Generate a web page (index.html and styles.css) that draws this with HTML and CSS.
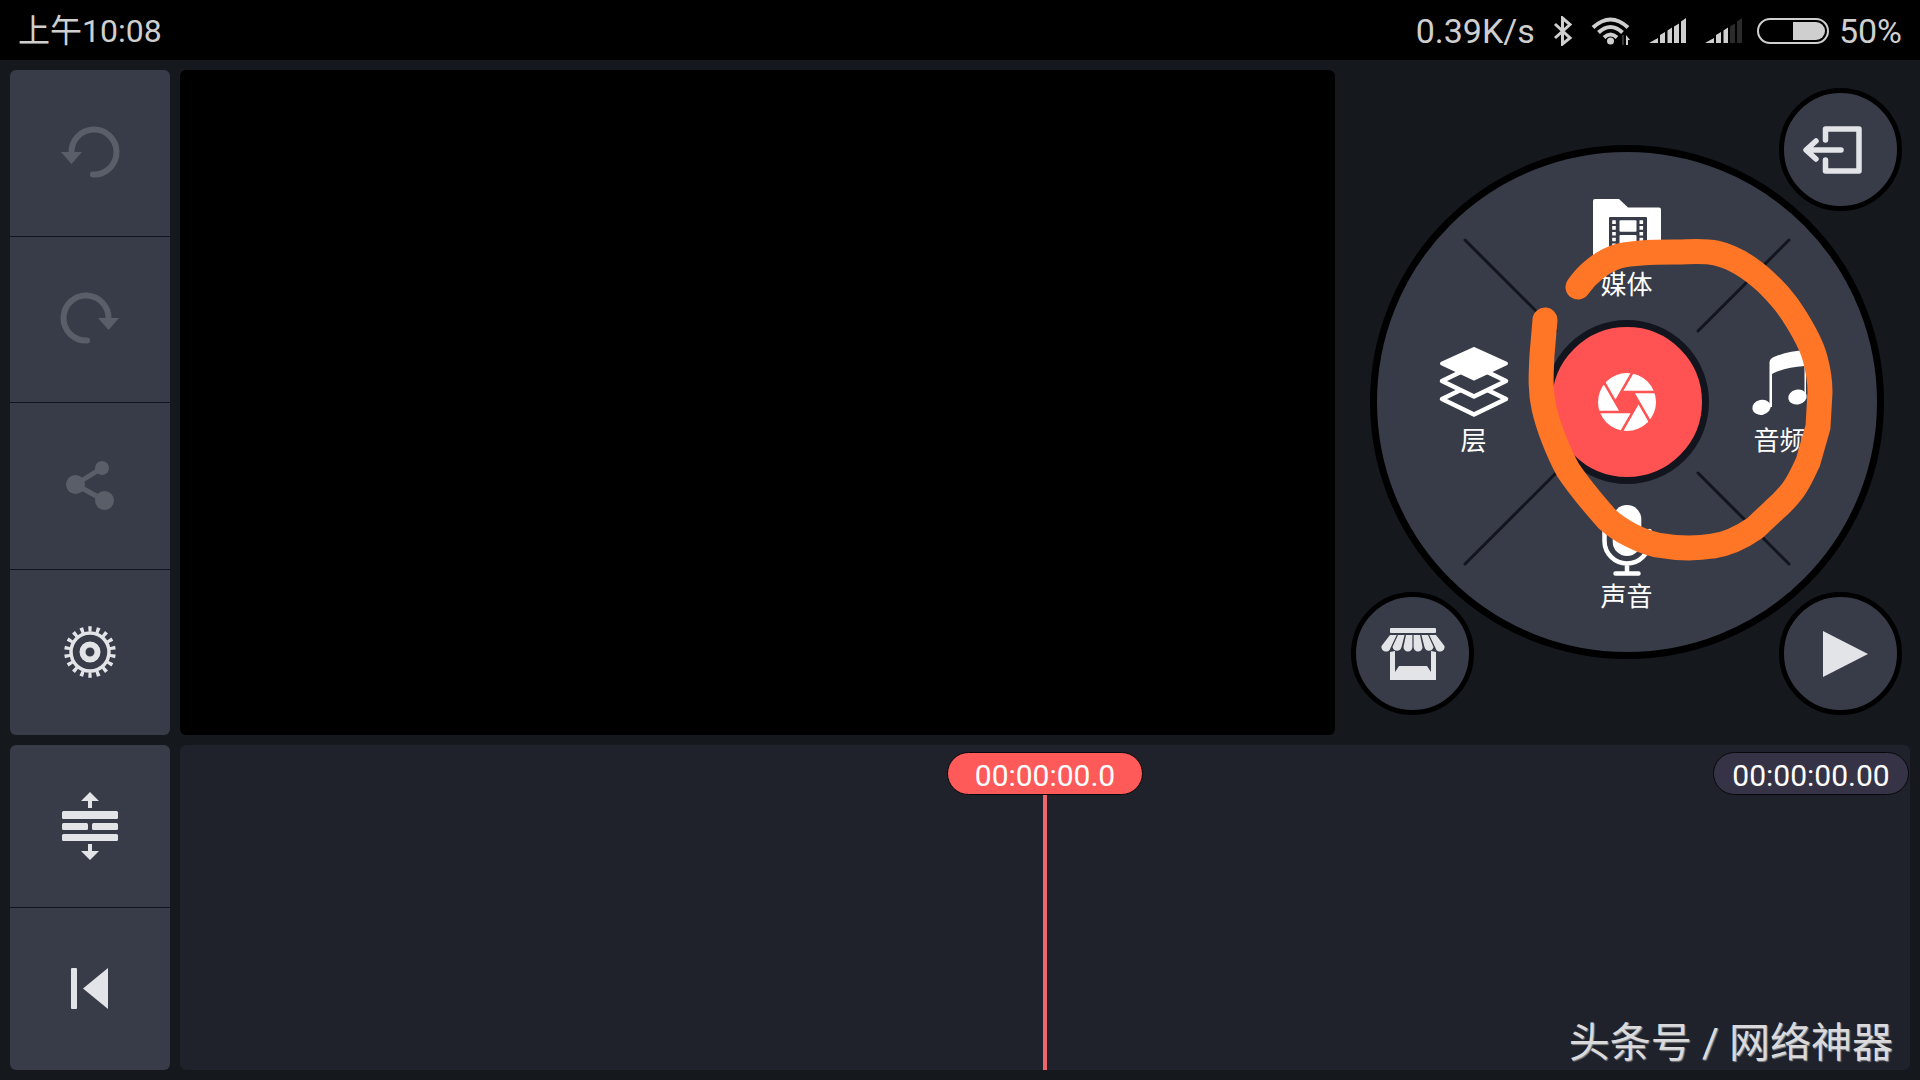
FILE: index.html
```html
<!DOCTYPE html>
<html lang="zh-CN">
<head>
<meta charset="utf-8">
<meta name="viewport" content="width=device-width, initial-scale=1">
<title>视频编辑</title>
<link rel="stylesheet" href="styles.css">
</head>
<body>
<header class="status">
  <time class="clock">上午10:08</time>
  <div class="indicators">
    <span>0.39K/s</span>
    <svg class="bluetooth" width="20" height="30" viewBox="0 0 20 30" aria-label="蓝牙"><path d="M2 8 17 22 9.500 28V2L17 8.500 2 22" fill="none" stroke="currentColor" stroke-width="3"/></svg>
    <svg class="wifi" width="40" height="28" viewBox="0 0 40 28" aria-label="WLAN">
      <g fill="none" stroke="currentColor" stroke-width="4"><path d="M2 10.500Q19.500-5.500 37 10.500"/><path d="M7.500 15.500Q19.500 4.500 31.500 15.500"/><path d="M13 20.500Q19.500 14.500 26 20.500"/></g>
      <circle cx="19.500" cy="24" r="3.500" fill="currentColor"/>
      <path d="M35 28V18L39 23H37V28Z" fill="currentColor"/><path d="M31 18V28H33V18Z" fill="#333"/>
    </svg>
    <svg class="signal" width="38" height="26" viewBox="0 0 38 26" aria-label="信号一" fill="currentColor"><path d="M0 25 9 20V25ZM11 25V17L16 14V25ZM18.500 25V12.500L23 9.500V25ZM25 25V8.500L30 5.500V25ZM32 25V3.500L37 0V25Z"/></svg>
    <svg class="signal" width="38" height="26" viewBox="0 0 38 26" aria-label="信号二" fill="currentColor"><path d="M0 25 9 20V25ZM11 25V17L16 14V25ZM18.500 25V12.500L23 9.500V25Z"/><path d="M25 25V8.500L30 5.500V25ZM32 25V3.500L37 0V25Z" fill="#2b2b2b"/></svg>
    <svg class="battery" width="72" height="26" viewBox="0 0 72 26" aria-label="电量"><rect x="1" y="1" width="70" height="24" rx="12" fill="none" stroke="currentColor" stroke-width="2"/><path d="M36 4H59A9 9 0 0 1 59 22H36Z" fill="currentColor"/></svg>
    <span>50%</span>
  </div>
</header>

<main class="editor">
  <nav class="tools" aria-label="编辑">
    <button class="tool dim" type="button" aria-label="撤销"><svg class="icon" viewBox="-4 -4 72 72"><path d="M13.500 32A22.500 22.500 0 1 1 36 53.500H35" fill="none" stroke="currentColor" stroke-width="6" stroke-linecap="round"/><path d="M3 31H24L13.500 43Z" fill="currentColor"/></svg></button>
    <button class="tool dim" type="button" aria-label="重做"><svg class="icon" viewBox="-4 -4 72 72"><path d="M50.500 32A22.500 22.500 0 1 0 28 53.500H29" fill="none" stroke="currentColor" stroke-width="6" stroke-linecap="round"/><path d="M61 31H40L50.500 43Z" fill="currentColor"/></svg></button>
    <button class="tool dim" type="button" aria-label="分享"><svg class="icon" viewBox="-4 -4 72 72"><path d="M44 14 17.500 30.500 46.500 46.500" fill="none" stroke="currentColor" stroke-width="5"/><g fill="currentColor"><circle cx="44" cy="14" r="7"/><circle cx="17.500" cy="30.500" r="9.500"/><circle cx="46.500" cy="46.500" r="9.500"/></g></svg></button>
    <button class="tool" type="button" aria-label="设置"><svg class="icon" viewBox="-4 -4 72 72"><g fill="none" stroke="currentColor"><circle cx="32" cy="32" r="23" stroke-width="5.600" pathLength="180" stroke-dasharray="4.200 5.800" stroke-dashoffset="2.100" transform="rotate(-90 32 32)"/><circle cx="32" cy="32" r="19" stroke-width="3.500"/><circle cx="32" cy="32" r="7.500" stroke-width="6"/></g></svg></button>
  </nav>

  <section class="preview" aria-label="预览"></section>

  <section class="panel" aria-label="操作">
    <div class="wheel">
      <svg class="spokes" viewBox="0 0 500 500" aria-hidden="true"><path d="M88 88 179 179M412 88 321 179M88 412 179 321M412 412 321 321"/></svg>
      <button class="slice media" type="button"><svg class="icon" viewBox="0 0 72 72"><path d="M4 7H28L37 15.500H68Q70 15.500 70 17.500V64Q70 66 68 66H4Q2 66 2 64V9Q2 7 4 7Z" fill="currentColor"/><rect x="18" y="25" width="38" height="34" rx="1" class="cut"/><g fill="currentColor"><rect x="28.500" y="28.300" width="17" height="11.500" rx="1"/><rect x="28.500" y="43" width="17" height="12" rx="1"/></g><path d="M23 28.300V58M50.300 28.300V58" stroke="currentColor" stroke-width="3.600" stroke-dasharray="3.600 2.200"/></svg><span>媒体</span></button>
      <button class="slice layer" type="button"><svg class="icon" viewBox="0 2 72 72"><g class="cut" stroke="currentColor" stroke-width="4.500" stroke-linejoin="round"><path d="M36 37.500 68 53 36 68.500 4 53Z"/><path d="M36 19.500 68 35 36 50.500 4 35Z"/></g><path d="M36 3 68 17.500 36 32.500 4 17.500Z" fill="currentColor" stroke="currentColor" stroke-width="4" stroke-linejoin="round"/></svg><span>层</span></button>
      <button class="record" type="button" aria-label="拍摄"><svg class="icon" viewBox="-36 -36 72 72"><circle r="29" fill="#fff"/><path d="M11 0 5.500 9.500H-5.500L-11 0-5.500-9.500H5.500Z" fill="#ff5252"/><path d="M-5 -10H30M6.200-9.300 23.700 21M11.200.700-6.300 31M5 10H-30M-6.200 9.300-23.700-21M-11.200-.700 6.300-31" stroke="#ff5252" stroke-width="2.500"/></svg></button>
      <button class="slice audio" type="button"><svg class="icon" viewBox="0 1 72 72" fill="currentColor"><ellipse cx="17.500" cy="60.300" rx="9.300" ry="7.500" transform="rotate(-12 17.500 60.300)"/><ellipse cx="53.500" cy="50" rx="9.300" ry="7.500" transform="rotate(-12 53.500 50)"/><path d="M25.500 60V15Q26 11 31 9.500 45 4 62 3V50H60.500V19Q42 20 28 27V60Z"/></svg><span>音频</span></button>
      <button class="slice voice" type="button"><svg class="icon" viewBox="0 0 72 72"><rect x="21.700" y="1" width="28.600" height="51" rx="14.300" fill="currentColor"/><path d="M13.500 27V37A22.500 22.500 0 0 0 58.500 37V27M36 60V69M24.500 69.500H47.500" fill="none" stroke="currentColor" stroke-width="4.500" stroke-linecap="round"/></svg><span>声音</span></button>
    </div>
    <button class="round exit" type="button" aria-label="退出"><svg class="icon" viewBox="0 0 72 72" fill="none" stroke="currentColor" stroke-width="5.500" stroke-linecap="round" stroke-linejoin="round"><path d="M20.500 26V15H54V57H20.500V46M36 36H2M11 27 1 36 11 45"/></svg></button>
    <button class="round store" type="button" aria-label="商店"><svg class="icon" viewBox="0 0 72 72" fill="currentColor"><rect x="13" y="10" width="46" height="5" rx="1"/><path d="M13 17H19.700L13.500 30A4.600 4.600 0 0 1 4.500 28ZM21 17H27.600L24.500 29A4.600 4.600 0 0 1 15.500 29ZM29 17H35.400V29A4.400 4.400 0 0 1 26.500 29ZM36.600 17H43L45.500 29A4.400 4.400 0 0 1 36.600 29ZM44.400 17H51L56.500 29A4.600 4.600 0 0 1 47.500 29ZM52.300 17H59L67.500 28A4.600 4.600 0 0 1 58.500 30Z"/><path d="M13 34 18 33V54L22 48H50L54 54V33L59 34V62H13Z"/></svg></button>
    <button class="round play" type="button" aria-label="播放"><svg class="icon" viewBox="0 0 72 72"><path d="M18 13V59L63 36Z" fill="currentColor"/></svg></button>
    <svg class="marker" viewBox="0 0 514 514" aria-hidden="true"><path d="M208 142C217 129 232 116 249 111 262 108 285 107 303 107 318 107 333 105 346 108 364 112 380 122 397 138 407 148 415 156 423 169 432 183 441 198 445 213 448 224 450 236 450 247L448 282 438 317C433 328 429 337 423 345 417 353 410 360 403 366L385 383C372 392 358 399 343 401 325 404 304 403 287 400 270 396 250 386 237 374 222 357 208 340 198 325 188 307 178 281 174 263 170 245 171 230 172 210L175 175"/></svg>
  </section>

  <nav class="tools" aria-label="时间轴">
    <button class="tool" type="button" aria-label="轨道高度"><svg class="icon" viewBox="-4 -4 72 72" fill="currentColor"><path d="M32-2 41 7H34V14H30V7H23Z"/><rect x="4" y="17" width="56" height="8" rx="1.500"/><rect x="4" y="29" width="26" height="7" rx="1.500"/><rect x="34" y="29" width="26" height="7" rx="1.500"/><rect x="4" y="40" width="56" height="7" rx="1.500"/><path d="M32 66 41 57H34V50H30V57H23Z"/></svg></button>
    <button class="tool" type="button" aria-label="回到开头"><svg class="icon" viewBox="-4 -4 72 72" fill="currentColor"><rect x="13" y="11" width="6" height="41" rx="1"/><path d="M50 11V52L25 31.500Z"/></svg></button>
  </nav>

  <section class="timeline" aria-label="时间线">
    <div class="playhead"><span class="pill current">00:00:00.0</span></div>
    <span class="pill total">00:00:00.00</span>
    <p class="credit">头条号 / 网络神器</p>
  </section>
</main>
</body>
</html>
```
FILE: styles.css
```css
:root {
  --page: #15181d;
  --key: #383c48;
  --line: #12151e;
  --glyph: #e2e4e7;
  --red: #ff5252;
}

* {
  box-sizing: border-box;
}

body {
  margin: 0;
  min-height: 100vh;
  display: flex;
  flex-direction: column;
  background: var(--page);
  color: #fff;
  font-family: Roboto, "Noto Sans CJK SC", sans-serif;
}

button {
  margin: 0;
  padding: 0;
  border: 0;
  background: var(--key);
  color: var(--glyph);
  font: inherit;
  cursor: pointer;
}

.icon {
  display: block;
  width: 72px;
  height: 72px;
  overflow: visible;
}

/* Status bar */
.status {
  height: 60px;
  padding: 2px 18px 0;
  display: flex;
  align-items: center;
  justify-content: space-between;
  background: #000;
  color: #cfcfcf;
  font-size: 34px;
  line-height: 40px;
}

.clock {
  font-size: 32px;
}

.indicators {
  display: flex;
  align-items: center;
  gap: 18px;
}

.battery {
  margin: 0 -8px 0 -4px;
}

/* Editor */
.editor {
  flex: 1;
  padding: 10px;
  display: grid;
  grid-template-columns: 160px 1fr 565px;
  grid-template-rows: 665fr 325fr;
  gap: 10px;
}

.tools {
  display: flex;
  flex-direction: column;
  overflow: hidden;
  border-radius: 6px;
}

.tool {
  flex: 1;
  display: grid;
  place-items: center;
}

.tool:not(:last-child) {
  border-bottom: 1px solid var(--line);
}

.dim {
  color: #5a5e68;
}

.preview {
  border-radius: 6px;
  background: #000;
}

/* Control panel: everything shares one cell */
.panel {
  padding: 18px 8px 20px 6px;
  display: grid;
}

.panel > * {
  grid-area: 1 / 1;
}

.wheel {
  position: relative;
  place-self: center;
  width: 514px;
  height: 514px;
  display: grid;
  grid-template: repeat(3, 156px) / repeat(3, 153px);
  place-content: center;
  border: 7px solid #000;
  border-radius: 50%;
  background: var(--key);
}

.spokes {
  position: absolute;
  inset: 0;
  stroke: var(--line);
  stroke-width: 3;
  stroke-linecap: round;
}

.cut {
  fill: var(--key);
}

.slice {
  position: relative;
  place-self: center;
  display: flex;
  flex-direction: column;
  align-items: center;
  gap: 6px;
  background: none;
  color: #fff;
  font-size: 26px;
  line-height: 30px;
}

.media {
  grid-area: 1 / 2;
}

.layer {
  grid-area: 2 / 1;
}

.audio {
  grid-area: 2 / 3;
}

.voice {
  grid-area: 3 / 2;
}

.record {
  grid-area: 2 / 2;
  position: relative;
  place-self: center;
  width: 164px;
  height: 164px;
  display: grid;
  place-items: center;
  border: 7px solid var(--line);
  border-radius: 50%;
  background: var(--red);
}

.round {
  width: 123px;
  height: 123px;
  display: grid;
  place-items: center;
  z-index: 1;
  border: 5px solid #000;
  border-radius: 50%;
}

.exit {
  place-self: start end;
}

.store {
  place-self: end start;
}

.play {
  place-self: end;
}

.marker {
  z-index: 2;
  place-self: center;
  width: 514px;
  height: 514px;
  pointer-events: none;
  fill: none;
  stroke: #ff7626;
  stroke-width: 25;
  stroke-linecap: round;
  stroke-linejoin: round;
}

/* Timeline */
.timeline {
  grid-column: 2 / 4;
  position: relative;
  display: grid;
  grid-template-columns: 1fr auto 1fr;
  border-radius: 6px;
  background: #1f222a;
}

.playhead {
  grid-column: 2;
  padding-top: 7px;
  display: flex;
  flex-direction: column;
  align-items: center;
}

.playhead::after {
  content: "";
  flex: 1;
  width: 4px;
  background: #ee666b;
}

.pill {
  width: 196px;
  height: 43px;
  border: 1px solid #08080c;
  border-radius: 22px;
  text-align: center;
  font-size: 30px;
  line-height: 46px;
}

.current {
  background: #ff5a5a;
}

.total {
  justify-self: end;
  margin: 7px 1px;
  background: #363346;
}

.credit {
  position: absolute;
  right: 17px;
  bottom: 0;
  margin: 0;
  color: #dadadc;
  font-size: 41px;
  line-height: 54px;
  text-shadow: 1px 1px 1px #8a8a8c;
}
```
